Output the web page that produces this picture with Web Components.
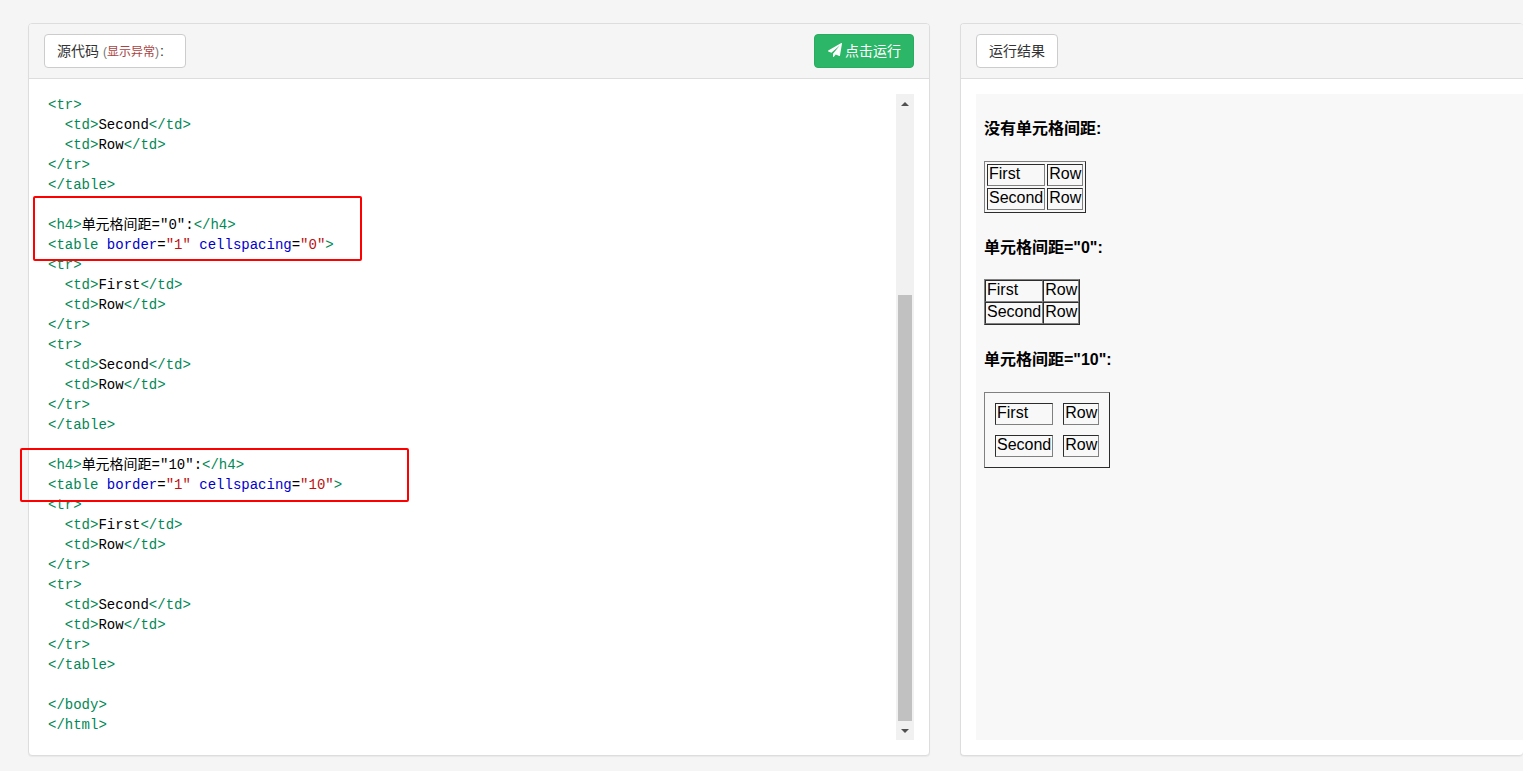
<!DOCTYPE html>
<html lang="zh">
<head>
<meta charset="utf-8">
<title>单元格间距</title>
<style>
  html, body { margin: 0; height: 100%; overflow: hidden; background: #f5f5f5; }
  body { font: 14px/20px "Liberation Sans", "Noto Sans CJK SC", sans-serif; color: #333; }
</style>
</head>
<body>
<try-page>
  <try-panel>
    <try-button slot="left"><span style="margin-right:9px">源代码 <small>(<em>显示异常</em>)</small>:</span></try-button>
    <try-button slot="right" kind="run"><span>点击运行</span></try-button>
    <code-view></code-view>
  </try-panel>
  <try-panel>
    <try-button slot="left"><span>运行结果</span></try-button>
    <result-view></result-view>
  </try-panel>
  <red-mark style="left:33px;top:196px;width:329px;height:65px"></red-mark>
  <red-mark style="left:20px;top:448px;width:389px;height:54px"></red-mark>
</try-page>

<script>
class TryPage extends HTMLElement {
  constructor() {
    super();
    this.attachShadow({ mode: "open" }).innerHTML = `
      <style>
        :host {
          display: grid;
          grid-template-columns: 902px 563px;
          gap: 30px;
          padding: 23px 0 0 28px;
          position: relative;
        }
        ::slotted(try-panel:nth-child(2)) { border-right: 0; }
      </style>
      <slot></slot>
    `;
  }
}

class TryPanel extends HTMLElement {
  constructor() {
    super();
    this.attachShadow({ mode: "open" }).innerHTML = `
      <style>
        :host {
          display: flex;
          flex-direction: column;
          box-sizing: border-box;
          height: 733px;
          background: #fff;
          border: 1px solid #ddd;
          border-radius: 4px;
          box-shadow: 0 1px 1px rgba(0, 0, 0, 0.05);
        }
        .heading {
          display: flex;
          justify-content: space-between;
          align-items: center;
          box-sizing: border-box;
          height: 55px;
          padding: 0 15px;
          background: #f5f5f5;
          border-bottom: 1px solid #ddd;
          border-radius: 3px 3px 0 0;
        }
        .body { flex: 1; min-height: 0; padding: 15px 15px 15px; }
      </style>
      <div class="heading"><slot name="left"></slot><slot name="right"></slot></div>
      <div class="body"><slot></slot></div>
    `;
  }
}

class TryButton extends HTMLElement {
  constructor() {
    super();
    const run = this.getAttribute("kind") === "run";
    this.attachShadow({ mode: "open" }).innerHTML = `
      <style>
        :host {
          display: inline-flex;
          align-items: center;
          gap: 3px;
          box-sizing: border-box;
          height: 34px;
          padding: 0 12px;
          font-size: 14px;
          border: 1px solid ${run ? "#2aab60" : "#ccc"};
          border-radius: 4px;
          background: ${run ? "#2cb768" : "#fff"};
          color: ${run ? "#fff" : "#333"};
        }
        svg { width: 14px; height: 14px; margin: -2px 0 0 1px; fill: #fff; }
      </style>
      ${run ? `<svg viewBox="0 0 1792 1792"><path d="M1764 11q33 24 27 64l-256 1536q-5 29-32 45-14 8-31 8-11 0-24-5l-453-185-242 295q-18 23-49 23-13 0-22-4-19-7-30.5-23.5t-11.5-36.5v-349l864-1059-1069 925-395-162q-37-14-40-55-2-40 32-59l1664-960q15-9 32-9 20 0 36 11z"/></svg>` : ""}
      <slot></slot>
    `;
  }
  connectedCallback() {
    // small/em live in the light DOM, style them from here
    const small = this.querySelector("small");
    if (small) {
      small.style.fontSize = "12px";
      small.style.color = "#777";
      small.style.marginRight = "1px";
      small.querySelector("em").style.cssText = "font-style:normal;color:#a94442";
    }
  }
}

const SOURCE = `<tr>
  <td>Second</td>
  <td>Row</td>
</tr>
</table>

<h4>单元格间距="0":</h4>
<table border="1" cellspacing="0">
<tr>
  <td>First</td>
  <td>Row</td>
</tr>
<tr>
  <td>Second</td>
  <td>Row</td>
</tr>
</table>

<h4>单元格间距="10":</h4>
<table border="1" cellspacing="10">
<tr>
  <td>First</td>
  <td>Row</td>
</tr>
<tr>
  <td>Second</td>
  <td>Row</td>
</tr>
</table>

</body>
</html>`;

function esc(s) {
  return s.replace(/&/g, "&amp;").replace(/</g, "&lt;").replace(/>/g, "&gt;");
}

function highlightAttrs(text) {
  return text.replace(/([a-z]+)=("[^"]*")/g, '<i class="attr">$1</i>=<i class="str">$2</i>');
}

function highlightLine(line) {
  let out = "";
  let last = 0;
  for (const m of line.matchAll(/(<\/?\w+)([^>]*)(>)/g)) {
    out += esc(line.slice(last, m.index));
    out += `<i class="tag">${esc(m[1])}</i>${highlightAttrs(m[2])}<i class="tag">&gt;</i>`;
    last = m.index + m[0].length;
  }
  return out + esc(line.slice(last));
}

class CodeView extends HTMLElement {
  constructor() {
    super();
    const lines = SOURCE.split("\n").map((l) => `<div class="line">${highlightLine(l) || "&nbsp;"}</div>`).join("");
    this.attachShadow({ mode: "open" }).innerHTML = `
      <style>
        :host {
          display: flex;
          height: 646px;
          font: 14px/20px "Liberation Mono", "Noto Sans CJK SC", monospace;
          color: #000;
        }
        .code { flex: 1; padding: 1px 0 0 4px; overflow: hidden; }
        .line { height: 20px; white-space: pre; }
        i { font-style: normal; }
        .tag { color: #008855; }
        .attr { color: #0000cc; }
        .str { color: #bb1111; }
      </style>
      <div class="code">${lines}</div>
      <fake-scrollbar></fake-scrollbar>
    `;
  }
}

class FakeScrollbar extends HTMLElement {
  constructor() {
    super();
    this.attachShadow({ mode: "open" }).innerHTML = `
      <style>
        :host {
          display: flex;
          flex-direction: column;
          align-items: center;
          width: 18px;
          background: #f1f1f1;
        }
        .btn { height: 19px; flex: none; display: flex; align-items: center; justify-content: center; }
        .btn i { width: 0; height: 0; border: 4px solid transparent; }
        .up i { border-bottom: 4px solid #505050; border-top-width: 0; }
        .down i { border-top: 4px solid #505050; border-bottom-width: 0; }
        .track { flex: 1; width: 14px; display: flex; flex-direction: column; }
        .before { height: 182px; flex: none; }
        .thumb { flex: 1; background: #c1c1c1; }
      </style>
      <div class="btn up"><i></i></div>
      <div class="track"><div class="before"></div><div class="thumb"></div></div>
      <div class="btn down"><i></i></div>
    `;
  }
}

class ResultView extends HTMLElement {
  constructor() {
    super();
    const rows = `<tr><td>First</td><td>Row</td></tr><tr><td>Second</td><td>Row</td></tr>`;
    this.attachShadow({ mode: "open" }).innerHTML = `
      <style>
        :host {
          display: flow-root;
          box-sizing: border-box;
          height: 646px;
          margin-right: -15px;
          padding: 0 8px;
          background: #f8f8f8;
          color: #000;
          font: 16px "Liberation Sans", "Noto Sans CJK SC", sans-serif;
        }
        h4 { font-size: 16px; font-weight: bold; margin: 21.28px 0; }
        td { padding: 0 1px 2px; }
      </style>
      <h4>没有单元格间距:</h4>
      <table border="1">${rows}</table>
      <h4>单元格间距="0":</h4>
      <table border="1" cellspacing="0">${rows}</table>
      <h4>单元格间距="10":</h4>
      <table border="1" cellspacing="10">${rows}</table>
    `;
  }
}

class RedMark extends HTMLElement {
  constructor() {
    super();
    this.attachShadow({ mode: "open" }).innerHTML = `
      <style>
        :host {
          display: block;
          position: absolute;
          box-sizing: border-box;
          border: 2px solid #f00;
          border-radius: 2px;
        }
      </style>
    `;
  }
}

customElements.define("try-page", TryPage);
customElements.define("try-panel", TryPanel);
customElements.define("try-button", TryButton);
customElements.define("fake-scrollbar", FakeScrollbar);
customElements.define("code-view", CodeView);
customElements.define("result-view", ResultView);
customElements.define("red-mark", RedMark);
</script>
</body>
</html>
